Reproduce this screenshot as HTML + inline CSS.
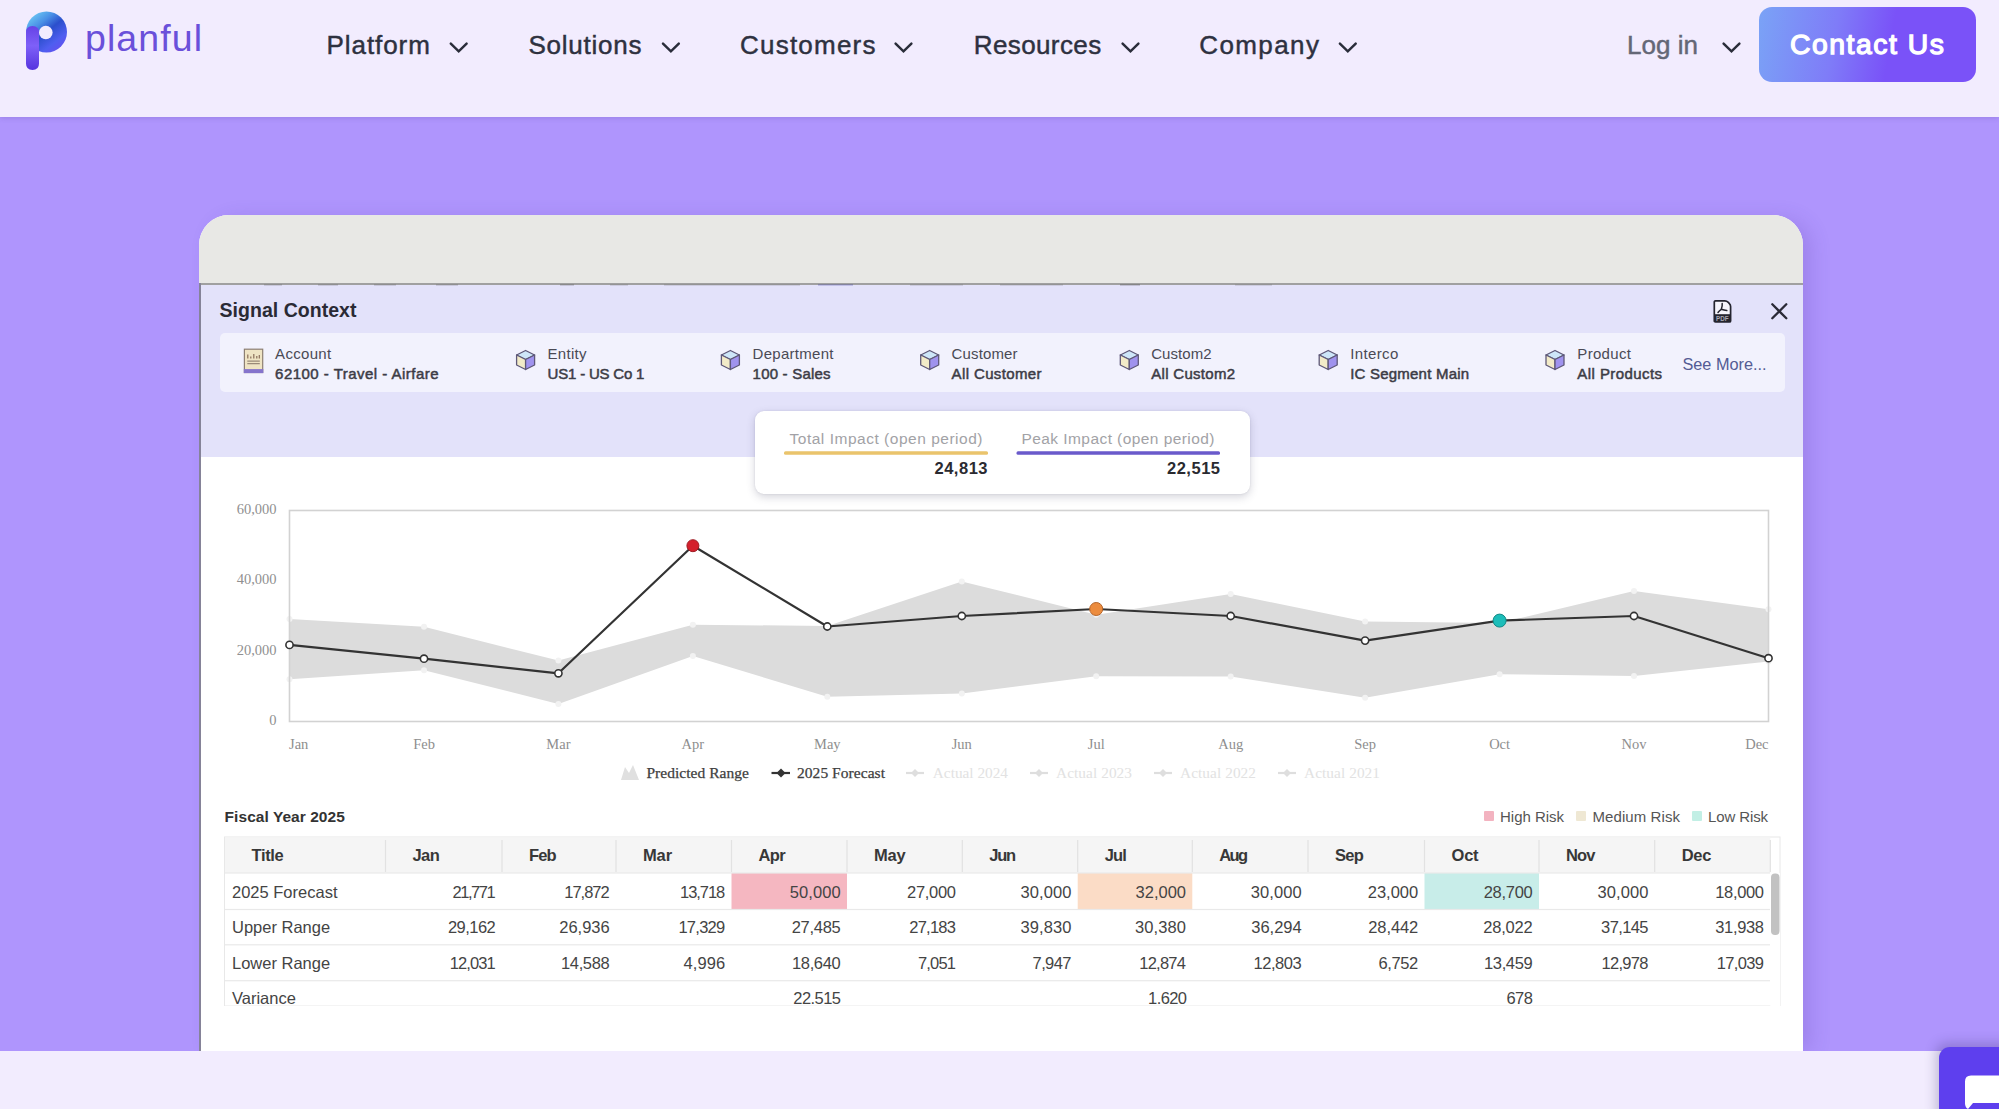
<!DOCTYPE html>
<html><head><meta charset="utf-8">
<style>
*{box-sizing:border-box;margin:0;padding:0}
html,body{width:1999px;height:1109px;overflow:hidden;background:#f2ecfe;font-family:"Liberation Sans",sans-serif}
.abs{position:absolute}
#nav{position:absolute;left:0;top:0;width:1999px;height:117px;background:#f2ecfe;z-index:2;box-shadow:0 1px 5px rgba(80,60,150,0.22)}
#hero{position:absolute;left:0;top:117px;width:1999px;height:934px;background:#af95fd}
#card{position:absolute;left:199px;top:215px;width:1604px;height:836px;background:#fff;border-radius:30px 30px 0 0;overflow:hidden;box-shadow:10px 2px 20px -2px rgba(70,40,150,0.17)}
#graybar{position:absolute;left:0;top:0;width:1604px;height:69px;background:#e8e8e5}
#sep{position:absolute;left:0;top:68px;width:1604px;height:2px;background:#a0a0a0}
#lav{position:absolute;left:0;top:70px;width:1604px;height:172px;background:#e3e2fa}
#leftline{position:absolute;left:0.3px;top:68px;width:1.3px;height:768px;background:#858398}
#ctxrow{position:absolute;left:21px;top:118px;width:1565px;height:59px;background:#f2f2fd;border-radius:5px}
#popup{position:absolute;left:755px;top:411px;width:495px;height:83px;background:#fff;border-radius:9px;box-shadow:0 3px 8px rgba(60,60,90,0.22),0 0 2px rgba(60,60,90,0.12)}
svg.ov{position:absolute;left:0;top:0;z-index:3}
#chat{z-index:2;position:absolute;left:1938.5px;top:1047px;width:80px;height:80px;background:#5e3fee;border-radius:11px;box-shadow:-3px -4px 12px rgba(40,30,90,0.25)}
</style></head>
<body>
<div id="nav">
  <svg class="abs" style="left:20px;top:8px" width="54" height="68" viewBox="0 0 54 68">
    <defs>
      <linearGradient id="lg1" x1="0.1" y1="0" x2="0.9" y2="1">
        <stop offset="0" stop-color="#74d6f7"/><stop offset="0.3" stop-color="#4a90e6"/><stop offset="0.5" stop-color="#2b4fcc"/><stop offset="0.75" stop-color="#4f5ef0"/><stop offset="1" stop-color="#6c4cf0"/>
      </linearGradient>
      <linearGradient id="lg2" x1="0" y1="0" x2="0" y2="1">
        <stop offset="0" stop-color="#6642e6"/><stop offset="0.45" stop-color="#7e60f8"/><stop offset="1" stop-color="#5634de"/>
      </linearGradient>
    </defs>
    <circle cx="26.5" cy="24" r="20.5" fill="url(#lg1)"/>
    <path d="M6 24.5 Q6 18 12.5 18 Q19 18 19 24.5 L19 55.5 Q19 62 12.5 62 Q6 62 6 55.5 Z" fill="url(#lg2)"/>
    <circle cx="25.8" cy="24.5" r="6.8" fill="#f2ecfe"/>
  </svg>
  <div class="abs" style="left:1759px;top:7px;width:217px;height:75px;border-radius:13px;background:linear-gradient(100deg,#7aa3f6 0%,#7f7cf8 35%,#7a52f8 60%,#7a52f8 100%)"></div>
</div>

<div id="hero"></div>
<div style="position:absolute;left:0;top:1051px;width:1999px;height:58px;background:#f2ecfe;z-index:1"></div>

<div id="card">
  <div id="graybar"></div>
  <div id="sep"></div>
  <div id="lav"></div>
  <div id="leftline"></div>
  <div id="ctxrow"></div>
</div>
<div id="popup"></div>
<div id="chat"></div>

<svg class="ov" width="1999" height="1109" viewBox="0 0 1999 1109">
  <defs><clipPath id="tclip"><rect x="0" y="0" width="1999" height="1006"/></clipPath></defs>
  <text x="326.6" y="53.8" font-size="26" fill="#2e3140" font-weight="normal" text-anchor="start" font-family='"Liberation Sans",sans-serif' textLength="103.2" lengthAdjust="spacing" stroke="#2e3140" stroke-width="0.45">Platform</text><text x="528.4" y="53.8" font-size="26" fill="#2e3140" font-weight="normal" text-anchor="start" font-family='"Liberation Sans",sans-serif' textLength="113.2" lengthAdjust="spacing" stroke="#2e3140" stroke-width="0.45">Solutions</text><text x="740.1" y="53.8" font-size="26" fill="#2e3140" font-weight="normal" text-anchor="start" font-family='"Liberation Sans",sans-serif' textLength="135.3" lengthAdjust="spacing" stroke="#2e3140" stroke-width="0.45">Customers</text><text x="973.7" y="53.8" font-size="26" fill="#2e3140" font-weight="normal" text-anchor="start" font-family='"Liberation Sans",sans-serif' textLength="127.5" lengthAdjust="spacing" stroke="#2e3140" stroke-width="0.45">Resources</text><text x="1199.2" y="53.8" font-size="26" fill="#2e3140" font-weight="normal" text-anchor="start" font-family='"Liberation Sans",sans-serif' textLength="119.7" lengthAdjust="spacing" stroke="#2e3140" stroke-width="0.45">Company</text><text x="1627" y="53.9" font-size="26" fill="#646776" font-weight="normal" text-anchor="start" font-family='"Liberation Sans",sans-serif' textLength="71" lengthAdjust="spacing" stroke="#646776" stroke-width="0.45">Log in</text><path d="M450.8 43.6 L458.7 51.3 L466.59999999999997 43.6" fill="none" stroke="#2a2d3a" stroke-width="2.5" stroke-linecap="round" stroke-linejoin="miter"/><path d="M663.0 43.6 L670.9 51.3 L678.8 43.6" fill="none" stroke="#2a2d3a" stroke-width="2.5" stroke-linecap="round" stroke-linejoin="miter"/><path d="M895.6 43.6 L903.5 51.3 L911.4 43.6" fill="none" stroke="#2a2d3a" stroke-width="2.5" stroke-linecap="round" stroke-linejoin="miter"/><path d="M1122.6 43.6 L1130.5 51.3 L1138.4 43.6" fill="none" stroke="#2a2d3a" stroke-width="2.5" stroke-linecap="round" stroke-linejoin="miter"/><path d="M1339.8999999999999 43.6 L1347.8 51.3 L1355.7 43.6" fill="none" stroke="#2a2d3a" stroke-width="2.5" stroke-linecap="round" stroke-linejoin="miter"/><path d="M1723.6 43.6 L1731.5 51.3 L1739.4 43.6" fill="none" stroke="#2a2d3a" stroke-width="2.5" stroke-linecap="round" stroke-linejoin="miter"/><text x="1790" y="54" font-size="28.3" fill="#ffffff" font-weight="normal" text-anchor="start" font-family='"Liberation Sans",sans-serif' textLength="154" lengthAdjust="spacing" stroke="#ffffff" stroke-width="1.3">Contact Us</text><text x="85" y="51" font-size="37.5" fill="#6a50da" font-weight="normal" text-anchor="start" font-family='"Liberation Sans",sans-serif' textLength="117" lengthAdjust="spacing" >planful</text>
  <rect x="264" y="284.3" width="18" height="1.2" fill="#666" opacity="0.4"/><rect x="318" y="284.3" width="20" height="1.2" fill="#666" opacity="0.4"/><rect x="374" y="284.3" width="22" height="1.2" fill="#666" opacity="0.4"/><rect x="436" y="284.3" width="22" height="1.2" fill="#666" opacity="0.4"/><rect x="560" y="284.3" width="14" height="1.2" fill="#555" opacity="0.4"/><rect x="610" y="284.3" width="18" height="1.2" fill="#777" opacity="0.4"/><rect x="664" y="284.3" width="136" height="1.2" fill="#777" opacity="0.4"/><rect x="818" y="284.3" width="35" height="1.2" fill="#3a3a9a" opacity="0.4"/><rect x="910" y="284.3" width="53" height="1.2" fill="#777" opacity="0.4"/><rect x="1000" y="284.3" width="63" height="1.2" fill="#777" opacity="0.4"/><rect x="1120" y="284.3" width="20" height="1.2" fill="#444" opacity="0.4"/><rect x="1235" y="284.3" width="37" height="1.2" fill="#777" opacity="0.4"/><text x="219.5" y="317.2" font-size="19.5" fill="#2a2a35" font-weight="bold" text-anchor="start" font-family='"Liberation Sans",sans-serif' textLength="137" lengthAdjust="spacing" >Signal Context</text><path d="M1772.3 304.3 L1786.3 318.3 M1786.3 304.3 L1772.3 318.3" stroke="#2a2a36" stroke-width="2.3" stroke-linecap="round" fill="none"/><g transform="translate(1713,300)"><path d="M1.3 2 Q1.3 0.9 2.5 0.9 L11.8 0.9 Q13.8 0.9 15.3 2.4 L16.2 3.3 Q17.6 4.7 17.6 6.5 L17.6 20.9 Q17.6 22 16.4 22 L2.5 22 Q1.3 22 1.3 20.9 Z" fill="#f6f5fc" stroke="#25252f" stroke-width="1.7"/><rect x="1.3" y="14.2" width="16.3" height="7.8" fill="#25252f"/><text x="9.4" y="20.6" font-size="6.3" font-weight="bold" fill="#a8a8b4" text-anchor="middle" font-family='"Liberation Sans",sans-serif'>PDF</text><path d="M5 12.5 Q6.5 10.5 8.3 9.3 Q9.5 6 9.2 3.6 M8.3 9.3 Q11 10.2 13.8 10.6" fill="none" stroke="#25252f" stroke-width="1.5" stroke-linecap="round"/></g><text x="275.1" y="359.2" font-size="15" fill="#4a4a55" font-weight="normal" text-anchor="start" font-family='"Liberation Sans",sans-serif' textLength="56.1" lengthAdjust="spacing" >Account</text><text x="275.1" y="379.2" font-size="15" fill="#3c3c46" font-weight="normal" text-anchor="start" font-family='"Liberation Sans",sans-serif' textLength="163.5" lengthAdjust="spacing" stroke="#3c3c46" stroke-width="0.5">62100 - Travel - Airfare</text><g transform="translate(243.8,348.6)"><rect x="0.6" y="0.6" width="18.3" height="23.3" fill="#efe4c4" stroke="#8c7f72" stroke-width="1.2"/><rect x="0" y="20.5" width="19.5" height="4" fill="#8574cc"/><path d="M4 10 L4 6 M7 10 L7 8 M10 10 L10 5.5 M13 10 L13 7.5 M15.5 10 L15.5 6.5" stroke="#8a6e5a" stroke-width="1.2"/><path d="M3.5 12.5 L16 12.5 M3.5 15 L16 15" stroke="#9a8a78" stroke-width="1.1"/></g><text x="547.6" y="359.2" font-size="15" fill="#4a4a55" font-weight="normal" text-anchor="start" font-family='"Liberation Sans",sans-serif' textLength="38.8" lengthAdjust="spacing" >Entity</text><text x="547.6" y="379.2" font-size="15" fill="#3c3c46" font-weight="normal" text-anchor="start" font-family='"Liberation Sans",sans-serif' textLength="96.8" lengthAdjust="spacing" stroke="#3c3c46" stroke-width="0.5">US1 - US Co 1</text><g transform="translate(515.6,349.5)"><path d="M10 1 L19 5.5 L10 10 L1 5.5 Z" fill="#cde6f8" stroke="#5e5878" stroke-width="1.3" stroke-linejoin="round"/><path d="M1 5.5 L10 10 L10 20 L1 15.5 Z" fill="#f2ebc8" stroke="#5e5878" stroke-width="1.3" stroke-linejoin="round"/><path d="M19 5.5 L10 10 L10 20 L19 15.5 Z" fill="#a093ee" stroke="#5e5878" stroke-width="1.3" stroke-linejoin="round"/></g><text x="752.6" y="359.2" font-size="15" fill="#4a4a55" font-weight="normal" text-anchor="start" font-family='"Liberation Sans",sans-serif' textLength="80.9" lengthAdjust="spacing" >Department</text><text x="752.6" y="379.2" font-size="15" fill="#3c3c46" font-weight="normal" text-anchor="start" font-family='"Liberation Sans",sans-serif' textLength="77.9" lengthAdjust="spacing" stroke="#3c3c46" stroke-width="0.5">100 - Sales</text><g transform="translate(720.4,349.5)"><path d="M10 1 L19 5.5 L10 10 L1 5.5 Z" fill="#cde6f8" stroke="#5e5878" stroke-width="1.3" stroke-linejoin="round"/><path d="M1 5.5 L10 10 L10 20 L1 15.5 Z" fill="#f2ebc8" stroke="#5e5878" stroke-width="1.3" stroke-linejoin="round"/><path d="M19 5.5 L10 10 L10 20 L19 15.5 Z" fill="#a093ee" stroke="#5e5878" stroke-width="1.3" stroke-linejoin="round"/></g><text x="951.6" y="359.2" font-size="15" fill="#4a4a55" font-weight="normal" text-anchor="start" font-family='"Liberation Sans",sans-serif' textLength="65.9" lengthAdjust="spacing" >Customer</text><text x="951.6" y="379.2" font-size="15" fill="#3c3c46" font-weight="normal" text-anchor="start" font-family='"Liberation Sans",sans-serif' textLength="89.9" lengthAdjust="spacing" stroke="#3c3c46" stroke-width="0.5">All Customer</text><g transform="translate(919.7,349.5)"><path d="M10 1 L19 5.5 L10 10 L1 5.5 Z" fill="#cde6f8" stroke="#5e5878" stroke-width="1.3" stroke-linejoin="round"/><path d="M1 5.5 L10 10 L10 20 L1 15.5 Z" fill="#f2ebc8" stroke="#5e5878" stroke-width="1.3" stroke-linejoin="round"/><path d="M19 5.5 L10 10 L10 20 L19 15.5 Z" fill="#a093ee" stroke="#5e5878" stroke-width="1.3" stroke-linejoin="round"/></g><text x="1151.2" y="359.2" font-size="15" fill="#4a4a55" font-weight="normal" text-anchor="start" font-family='"Liberation Sans",sans-serif' textLength="60.5" lengthAdjust="spacing" >Custom2</text><text x="1151.2" y="379.2" font-size="15" fill="#3c3c46" font-weight="normal" text-anchor="start" font-family='"Liberation Sans",sans-serif' textLength="83.9" lengthAdjust="spacing" stroke="#3c3c46" stroke-width="0.5">All Custom2</text><g transform="translate(1119.3,349.5)"><path d="M10 1 L19 5.5 L10 10 L1 5.5 Z" fill="#cde6f8" stroke="#5e5878" stroke-width="1.3" stroke-linejoin="round"/><path d="M1 5.5 L10 10 L10 20 L1 15.5 Z" fill="#f2ebc8" stroke="#5e5878" stroke-width="1.3" stroke-linejoin="round"/><path d="M19 5.5 L10 10 L10 20 L19 15.5 Z" fill="#a093ee" stroke="#5e5878" stroke-width="1.3" stroke-linejoin="round"/></g><text x="1350.2" y="359.2" font-size="15" fill="#4a4a55" font-weight="normal" text-anchor="start" font-family='"Liberation Sans",sans-serif' textLength="48.1" lengthAdjust="spacing" >Interco</text><text x="1350.2" y="379.2" font-size="15" fill="#3c3c46" font-weight="normal" text-anchor="start" font-family='"Liberation Sans",sans-serif' textLength="118.9" lengthAdjust="spacing" stroke="#3c3c46" stroke-width="0.5">IC Segment Main</text><g transform="translate(1318.2,349.5)"><path d="M10 1 L19 5.5 L10 10 L1 5.5 Z" fill="#cde6f8" stroke="#5e5878" stroke-width="1.3" stroke-linejoin="round"/><path d="M1 5.5 L10 10 L10 20 L1 15.5 Z" fill="#f2ebc8" stroke="#5e5878" stroke-width="1.3" stroke-linejoin="round"/><path d="M19 5.5 L10 10 L10 20 L19 15.5 Z" fill="#a093ee" stroke="#5e5878" stroke-width="1.3" stroke-linejoin="round"/></g><text x="1577.3" y="359.2" font-size="15" fill="#4a4a55" font-weight="normal" text-anchor="start" font-family='"Liberation Sans",sans-serif' textLength="53.6" lengthAdjust="spacing" >Product</text><text x="1577.3" y="379.2" font-size="15" fill="#3c3c46" font-weight="normal" text-anchor="start" font-family='"Liberation Sans",sans-serif' textLength="84.8" lengthAdjust="spacing" stroke="#3c3c46" stroke-width="0.5">All Products</text><g transform="translate(1545,349.5)"><path d="M10 1 L19 5.5 L10 10 L1 5.5 Z" fill="#cde6f8" stroke="#5e5878" stroke-width="1.3" stroke-linejoin="round"/><path d="M1 5.5 L10 10 L10 20 L1 15.5 Z" fill="#f2ebc8" stroke="#5e5878" stroke-width="1.3" stroke-linejoin="round"/><path d="M19 5.5 L10 10 L10 20 L19 15.5 Z" fill="#a093ee" stroke="#5e5878" stroke-width="1.3" stroke-linejoin="round"/></g><text x="1682.4" y="369.7" font-size="16.3" fill="#545c94" font-weight="normal" text-anchor="start" font-family='"Liberation Sans",sans-serif' >See More...</text><text x="789.5" y="443.5" font-size="15.5" fill="#a2a2a6" font-weight="normal" text-anchor="start" font-family='"Liberation Sans",sans-serif' textLength="193" lengthAdjust="spacing" >Total Impact (open period)</text><text x="1021.5" y="443.5" font-size="15.5" fill="#a2a2a6" font-weight="normal" text-anchor="start" font-family='"Liberation Sans",sans-serif' textLength="193" lengthAdjust="spacing" >Peak Impact (open period)</text><rect x="784" y="451.3" width="204" height="3.4" rx="1.5" fill="#eac46c"/><rect x="1016.5" y="451.3" width="203.5" height="3.4" rx="1.5" fill="#6a5acb"/><text x="987.5" y="473.7" font-size="16.5" fill="#2a2a30" font-weight="bold" text-anchor="end" font-family='"Liberation Sans",sans-serif' textLength="53" lengthAdjust="spacing" >24,813</text><text x="1220" y="473.7" font-size="16.5" fill="#2a2a30" font-weight="bold" text-anchor="end" font-family='"Liberation Sans",sans-serif' textLength="53" lengthAdjust="spacing" >22,515</text>
  <polygon points="289.5,618.9 424.0,626.8 558.4,660.6 692.9,624.8 827.3,625.9 961.8,581.4 1096.2,614.7 1230.7,593.9 1365.1,621.5 1499.6,623.0 1634.0,590.9 1768.5,609.2 1768.5,661.6 1634.0,675.9 1499.6,674.2 1365.1,697.8 1230.7,676.5 1096.2,676.2 961.8,693.6 827.3,696.7 692.9,655.9 558.4,703.9 424.0,670.2 289.5,679.2" fill="#dcdcdc"/><circle cx="289.5" cy="618.9" r="3" fill="#f2f2f2"/><circle cx="424.0" cy="626.8" r="3" fill="#f2f2f2"/><circle cx="558.4" cy="660.6" r="3" fill="#f2f2f2"/><circle cx="692.9" cy="624.8" r="3" fill="#f2f2f2"/><circle cx="827.3" cy="625.9" r="3" fill="#f2f2f2"/><circle cx="961.8" cy="581.4" r="3" fill="#f2f2f2"/><circle cx="1096.2" cy="614.7" r="3" fill="#f2f2f2"/><circle cx="1230.7" cy="593.9" r="3" fill="#f2f2f2"/><circle cx="1365.1" cy="621.5" r="3" fill="#f2f2f2"/><circle cx="1499.6" cy="623.0" r="3" fill="#f2f2f2"/><circle cx="1634.0" cy="590.9" r="3" fill="#f2f2f2"/><circle cx="1768.5" cy="609.2" r="3" fill="#f2f2f2"/><circle cx="289.5" cy="679.2" r="3" fill="#f2f2f2"/><circle cx="424.0" cy="670.2" r="3" fill="#f2f2f2"/><circle cx="558.4" cy="703.9" r="3" fill="#f2f2f2"/><circle cx="692.9" cy="655.9" r="3" fill="#f2f2f2"/><circle cx="827.3" cy="696.7" r="3" fill="#f2f2f2"/><circle cx="961.8" cy="693.6" r="3" fill="#f2f2f2"/><circle cx="1096.2" cy="676.2" r="3" fill="#f2f2f2"/><circle cx="1230.7" cy="676.5" r="3" fill="#f2f2f2"/><circle cx="1365.1" cy="697.8" r="3" fill="#f2f2f2"/><circle cx="1499.6" cy="674.2" r="3" fill="#f2f2f2"/><circle cx="1634.0" cy="675.9" r="3" fill="#f2f2f2"/><circle cx="1768.5" cy="661.6" r="3" fill="#f2f2f2"/><rect x="289.5" y="510.5" width="1479.0" height="211.0" fill="none" stroke="#d2d2d2" stroke-width="1.6"/><polyline points="289.5,644.9 424.0,658.7 558.4,673.3 692.9,545.7 827.3,626.5 961.8,616.0 1096.2,609.0 1230.7,616.0 1365.1,640.6 1499.6,620.6 1634.0,616.0 1768.5,658.2" fill="none" stroke="#333333" stroke-width="2.2" stroke-linejoin="round"/><circle cx="289.5" cy="644.9" r="3.6" fill="#fff" stroke="#333" stroke-width="1.6"/><circle cx="424.0" cy="658.7" r="3.6" fill="#fff" stroke="#333" stroke-width="1.6"/><circle cx="558.4" cy="673.3" r="3.6" fill="#fff" stroke="#333" stroke-width="1.6"/><circle cx="692.9" cy="545.7" r="6" fill="#d4202c" stroke="#9e1a22" stroke-width="1"/><circle cx="827.3" cy="626.5" r="3.6" fill="#fff" stroke="#333" stroke-width="1.6"/><circle cx="961.8" cy="616.0" r="3.6" fill="#fff" stroke="#333" stroke-width="1.6"/><circle cx="1096.2" cy="609.0" r="6.5" fill="#ec8c3e" stroke="#b5652a" stroke-width="1"/><circle cx="1230.7" cy="616.0" r="3.6" fill="#fff" stroke="#333" stroke-width="1.6"/><circle cx="1365.1" cy="640.6" r="3.6" fill="#fff" stroke="#333" stroke-width="1.6"/><circle cx="1499.6" cy="620.6" r="6.5" fill="#1cbdb9" stroke="#138a86" stroke-width="1"/><circle cx="1634.0" cy="616.0" r="3.6" fill="#fff" stroke="#333" stroke-width="1.6"/><circle cx="1768.5" cy="658.2" r="3.6" fill="#fff" stroke="#333" stroke-width="1.6"/><text x="276.5" y="724.8" font-size="14.5" fill="#909090" font-weight="normal" text-anchor="end" font-family='"Liberation Serif",serif' >0</text><text x="276.5" y="654.5" font-size="14.5" fill="#909090" font-weight="normal" text-anchor="end" font-family='"Liberation Serif",serif' >20,000</text><text x="276.5" y="584.1" font-size="14.5" fill="#909090" font-weight="normal" text-anchor="end" font-family='"Liberation Serif",serif' >40,000</text><text x="276.5" y="513.8" font-size="14.5" fill="#909090" font-weight="normal" text-anchor="end" font-family='"Liberation Serif",serif' >60,000</text><text x="289" y="748.6" font-size="14.5" fill="#8e8e8e" font-weight="normal" text-anchor="start" font-family='"Liberation Serif",serif' >Jan</text><text x="424.0" y="748.6" font-size="14.5" fill="#8e8e8e" font-weight="normal" text-anchor="middle" font-family='"Liberation Serif",serif' >Feb</text><text x="558.4" y="748.6" font-size="14.5" fill="#8e8e8e" font-weight="normal" text-anchor="middle" font-family='"Liberation Serif",serif' >Mar</text><text x="692.9" y="748.6" font-size="14.5" fill="#8e8e8e" font-weight="normal" text-anchor="middle" font-family='"Liberation Serif",serif' >Apr</text><text x="827.3" y="748.6" font-size="14.5" fill="#8e8e8e" font-weight="normal" text-anchor="middle" font-family='"Liberation Serif",serif' >May</text><text x="961.8" y="748.6" font-size="14.5" fill="#8e8e8e" font-weight="normal" text-anchor="middle" font-family='"Liberation Serif",serif' >Jun</text><text x="1096.2" y="748.6" font-size="14.5" fill="#8e8e8e" font-weight="normal" text-anchor="middle" font-family='"Liberation Serif",serif' >Jul</text><text x="1230.7" y="748.6" font-size="14.5" fill="#8e8e8e" font-weight="normal" text-anchor="middle" font-family='"Liberation Serif",serif' >Aug</text><text x="1365.1" y="748.6" font-size="14.5" fill="#8e8e8e" font-weight="normal" text-anchor="middle" font-family='"Liberation Serif",serif' >Sep</text><text x="1499.6" y="748.6" font-size="14.5" fill="#8e8e8e" font-weight="normal" text-anchor="middle" font-family='"Liberation Serif",serif' >Oct</text><text x="1634.0" y="748.6" font-size="14.5" fill="#8e8e8e" font-weight="normal" text-anchor="middle" font-family='"Liberation Serif",serif' >Nov</text><text x="1768.5" y="748.6" font-size="14.5" fill="#8e8e8e" font-weight="normal" text-anchor="end" font-family='"Liberation Serif",serif' >Dec</text><path d="M621 780 L625 767 L629 773 L633 765 L639 780 Z" fill="#e0e0e0"/><text x="646.4" y="778.2" font-size="15.5" fill="#404040" font-weight="normal" text-anchor="start" font-family='"Liberation Serif",serif' textLength="102.6" lengthAdjust="spacing" stroke="#404040" stroke-width="0.25">Predicted Range</text><path d="M771.5 773 L790 773" stroke="#333" stroke-width="2.2"/><path d="M781 768.5 L785.5 773 L781 777.5 L776.5 773 Z" fill="#333"/><text x="797" y="778.2" font-size="15.5" fill="#404040" font-weight="normal" text-anchor="start" font-family='"Liberation Serif",serif' textLength="88" lengthAdjust="spacing" stroke="#404040" stroke-width="0.25">2025 Forecast</text><path d="M906 773 L924 773" stroke="#dedede" stroke-width="2.2"/><path d="M915 769 L919 773 L915 777 L911 773 Z" fill="#dedede"/><text x="932.8" y="778.2" font-size="15.3" fill="#e2e2e2" font-weight="normal" text-anchor="start" font-family='"Liberation Serif",serif' textLength="75.2" lengthAdjust="spacing" >Actual 2024</text><path d="M1030 773 L1048 773" stroke="#dedede" stroke-width="2.2"/><path d="M1039 769 L1043 773 L1039 777 L1035 773 Z" fill="#dedede"/><text x="1056" y="778.2" font-size="15.3" fill="#e2e2e2" font-weight="normal" text-anchor="start" font-family='"Liberation Serif",serif' textLength="76" lengthAdjust="spacing" >Actual 2023</text><path d="M1154 773 L1172 773" stroke="#dedede" stroke-width="2.2"/><path d="M1163 769 L1167 773 L1163 777 L1159 773 Z" fill="#dedede"/><text x="1180" y="778.2" font-size="15.3" fill="#e2e2e2" font-weight="normal" text-anchor="start" font-family='"Liberation Serif",serif' textLength="76" lengthAdjust="spacing" >Actual 2022</text><path d="M1278 773 L1296 773" stroke="#dedede" stroke-width="2.2"/><path d="M1287 769 L1291 773 L1287 777 L1283 773 Z" fill="#dedede"/><text x="1304" y="778.2" font-size="15.3" fill="#e2e2e2" font-weight="normal" text-anchor="start" font-family='"Liberation Serif",serif' textLength="76" lengthAdjust="spacing" >Actual 2021</text>
  <g clip-path="url(#tclip)"><text x="224.6" y="822.4" font-size="15.5" fill="#333" font-weight="bold" text-anchor="start" font-family='"Liberation Sans",sans-serif' textLength="120.2" lengthAdjust="spacing" >Fiscal Year 2025</text><rect x="1484" y="811" width="10" height="10" rx="1" fill="#f3b3c0"/><text x="1500" y="822.2" font-size="15" fill="#555" font-weight="normal" text-anchor="start" font-family='"Liberation Sans",sans-serif' textLength="64" lengthAdjust="spacing" >High Risk</text><rect x="1576" y="811" width="10" height="10" rx="1" fill="#efe8d4"/><text x="1592.5" y="822.2" font-size="15" fill="#555" font-weight="normal" text-anchor="start" font-family='"Liberation Sans",sans-serif' textLength="87.5" lengthAdjust="spacing" >Medium Risk</text><rect x="1692" y="811" width="10" height="10" rx="1" fill="#c2efe5"/><text x="1708" y="822.2" font-size="15" fill="#555" font-weight="normal" text-anchor="start" font-family='"Liberation Sans",sans-serif' textLength="60" lengthAdjust="spacing" >Low Risk</text><rect x="224.5" y="837" width="1555.5" height="169" fill="#fff" stroke="#e8e8e8" stroke-width="1"/><rect x="225" y="837.5" width="1545.3" height="35.5" fill="#f5f5f5"/><rect x="731.5" y="873" width="115.5" height="36.5" fill="#f5b7c1"/><rect x="1077.7" y="873" width="114.59999999999991" height="36.5" fill="#fbdcc6"/><rect x="1424.5" y="873" width="114.5" height="36.5" fill="#c8ede9"/><rect x="384.9" y="840" width="1.2" height="32" fill="#e2e2e2"/><rect x="501.4" y="840" width="1.2" height="32" fill="#e2e2e2"/><rect x="615.4" y="840" width="1.2" height="32" fill="#e2e2e2"/><rect x="730.9" y="840" width="1.2" height="32" fill="#e2e2e2"/><rect x="846.4" y="840" width="1.2" height="32" fill="#e2e2e2"/><rect x="961.6999999999999" y="840" width="1.2" height="32" fill="#e2e2e2"/><rect x="1077.1000000000001" y="840" width="1.2" height="32" fill="#e2e2e2"/><rect x="1191.7" y="840" width="1.2" height="32" fill="#e2e2e2"/><rect x="1307.4" y="840" width="1.2" height="32" fill="#e2e2e2"/><rect x="1423.9" y="840" width="1.2" height="32" fill="#e2e2e2"/><rect x="1538.4" y="840" width="1.2" height="32" fill="#e2e2e2"/><rect x="1654.1000000000001" y="840" width="1.2" height="32" fill="#e2e2e2"/><rect x="1769.7" y="840" width="1.2" height="32" fill="#e2e2e2"/><rect x="225" y="872.4" width="1545" height="1.2" fill="#e9e9e9"/><rect x="225" y="908.9" width="1545" height="1.2" fill="#e9e9e9"/><rect x="225" y="944.1999999999999" width="1545" height="1.2" fill="#e9e9e9"/><rect x="225" y="980.1" width="1545" height="1.2" fill="#e9e9e9"/><text x="251.5" y="860.7" font-size="16.5" fill="#383838" font-weight="bold" text-anchor="start" font-family='"Liberation Sans",sans-serif' textLength="32.2" lengthAdjust="spacing" >Title</text><text x="412.5" y="860.7" font-size="16.5" fill="#383838" font-weight="bold" text-anchor="start" font-family='"Liberation Sans",sans-serif' textLength="27.3" lengthAdjust="spacing" >Jan</text><text x="529" y="860.7" font-size="16.5" fill="#383838" font-weight="bold" text-anchor="start" font-family='"Liberation Sans",sans-serif' textLength="27.7" lengthAdjust="spacing" >Feb</text><text x="643" y="860.7" font-size="16.5" fill="#383838" font-weight="bold" text-anchor="start" font-family='"Liberation Sans",sans-serif' textLength="29.1" lengthAdjust="spacing" >Mar</text><text x="758.5" y="860.7" font-size="16.5" fill="#383838" font-weight="bold" text-anchor="start" font-family='"Liberation Sans",sans-serif' textLength="27.1" lengthAdjust="spacing" >Apr</text><text x="874" y="860.7" font-size="16.5" fill="#383838" font-weight="bold" text-anchor="start" font-family='"Liberation Sans",sans-serif' textLength="31.6" lengthAdjust="spacing" >May</text><text x="989.3" y="860.7" font-size="16.5" fill="#383838" font-weight="bold" text-anchor="start" font-family='"Liberation Sans",sans-serif' textLength="26.8" lengthAdjust="spacing" >Jun</text><text x="1104.7" y="860.7" font-size="16.5" fill="#383838" font-weight="bold" text-anchor="start" font-family='"Liberation Sans",sans-serif' textLength="22.1" lengthAdjust="spacing" >Jul</text><text x="1219.3" y="860.7" font-size="16.5" fill="#383838" font-weight="bold" text-anchor="start" font-family='"Liberation Sans",sans-serif' textLength="28.8" lengthAdjust="spacing" >Aug</text><text x="1335" y="860.7" font-size="16.5" fill="#383838" font-weight="bold" text-anchor="start" font-family='"Liberation Sans",sans-serif' textLength="28.8" lengthAdjust="spacing" >Sep</text><text x="1451.5" y="860.7" font-size="16.5" fill="#383838" font-weight="bold" text-anchor="start" font-family='"Liberation Sans",sans-serif' textLength="27.1" lengthAdjust="spacing" >Oct</text><text x="1566" y="860.7" font-size="16.5" fill="#383838" font-weight="bold" text-anchor="start" font-family='"Liberation Sans",sans-serif' textLength="29.400000000000002" lengthAdjust="spacing" >Nov</text><text x="1681.7" y="860.7" font-size="16.5" fill="#383838" font-weight="bold" text-anchor="start" font-family='"Liberation Sans",sans-serif' textLength="29.7" lengthAdjust="spacing" >Dec</text><text x="232" y="897.7" font-size="16.5" fill="#444" font-weight="normal" text-anchor="start" font-family='"Liberation Sans",sans-serif' >2025 Forecast</text><text x="495.7" y="897.7" font-size="16.5" fill="#444" font-weight="normal" text-anchor="end" font-family='"Liberation Sans",sans-serif' textLength="43.2" lengthAdjust="spacing" >21,771</text><text x="609.7" y="897.7" font-size="16.5" fill="#444" font-weight="normal" text-anchor="end" font-family='"Liberation Sans",sans-serif' textLength="45.4" lengthAdjust="spacing" >17,872</text><text x="725.2" y="897.7" font-size="16.5" fill="#444" font-weight="normal" text-anchor="end" font-family='"Liberation Sans",sans-serif' textLength="45.1" lengthAdjust="spacing" >13,718</text><text x="840.7" y="897.7" font-size="16.5" fill="#444" font-weight="normal" text-anchor="end" font-family='"Liberation Sans",sans-serif' textLength="50.9" lengthAdjust="spacing" >50,000</text><text x="956.0" y="897.7" font-size="16.5" fill="#444" font-weight="normal" text-anchor="end" font-family='"Liberation Sans",sans-serif' textLength="49.0" lengthAdjust="spacing" >27,000</text><text x="1071.4" y="897.7" font-size="16.5" fill="#444" font-weight="normal" text-anchor="end" font-family='"Liberation Sans",sans-serif' textLength="50.9" lengthAdjust="spacing" >30,000</text><text x="1186.0" y="897.7" font-size="16.5" fill="#444" font-weight="normal" text-anchor="end" font-family='"Liberation Sans",sans-serif' textLength="50.4" lengthAdjust="spacing" >32,000</text><text x="1301.7" y="897.7" font-size="16.5" fill="#444" font-weight="normal" text-anchor="end" font-family='"Liberation Sans",sans-serif' textLength="50.9" lengthAdjust="spacing" >30,000</text><text x="1418.2" y="897.7" font-size="16.5" fill="#444" font-weight="normal" text-anchor="end" font-family='"Liberation Sans",sans-serif' textLength="50.4" lengthAdjust="spacing" >23,000</text><text x="1532.7" y="897.7" font-size="16.5" fill="#444" font-weight="normal" text-anchor="end" font-family='"Liberation Sans",sans-serif' textLength="49.0" lengthAdjust="spacing" >28,700</text><text x="1648.4" y="897.7" font-size="16.5" fill="#444" font-weight="normal" text-anchor="end" font-family='"Liberation Sans",sans-serif' textLength="50.9" lengthAdjust="spacing" >30,000</text><text x="1764.0" y="897.7" font-size="16.5" fill="#444" font-weight="normal" text-anchor="end" font-family='"Liberation Sans",sans-serif' textLength="48.7" lengthAdjust="spacing" >18,000</text><text x="232" y="933.1" font-size="16.5" fill="#444" font-weight="normal" text-anchor="start" font-family='"Liberation Sans",sans-serif' >Upper Range</text><text x="495.7" y="933.1" font-size="16.5" fill="#444" font-weight="normal" text-anchor="end" font-family='"Liberation Sans",sans-serif' textLength="47.7" lengthAdjust="spacing" >29,162</text><text x="609.7" y="933.1" font-size="16.5" fill="#444" font-weight="normal" text-anchor="end" font-family='"Liberation Sans",sans-serif' textLength="50.4" lengthAdjust="spacing" >26,936</text><text x="725.2" y="933.1" font-size="16.5" fill="#444" font-weight="normal" text-anchor="end" font-family='"Liberation Sans",sans-serif' textLength="46.8" lengthAdjust="spacing" >17,329</text><text x="840.7" y="933.1" font-size="16.5" fill="#444" font-weight="normal" text-anchor="end" font-family='"Liberation Sans",sans-serif' textLength="49.0" lengthAdjust="spacing" >27,485</text><text x="956.0" y="933.1" font-size="16.5" fill="#444" font-weight="normal" text-anchor="end" font-family='"Liberation Sans",sans-serif' textLength="46.8" lengthAdjust="spacing" >27,183</text><text x="1071.4" y="933.1" font-size="16.5" fill="#444" font-weight="normal" text-anchor="end" font-family='"Liberation Sans",sans-serif' textLength="50.9" lengthAdjust="spacing" >39,830</text><text x="1186.0" y="933.1" font-size="16.5" fill="#444" font-weight="normal" text-anchor="end" font-family='"Liberation Sans",sans-serif' textLength="50.9" lengthAdjust="spacing" >30,380</text><text x="1301.7" y="933.1" font-size="16.5" fill="#444" font-weight="normal" text-anchor="end" font-family='"Liberation Sans",sans-serif' textLength="50.4" lengthAdjust="spacing" >36,294</text><text x="1418.2" y="933.1" font-size="16.5" fill="#444" font-weight="normal" text-anchor="end" font-family='"Liberation Sans",sans-serif' textLength="49.9" lengthAdjust="spacing" >28,442</text><text x="1532.7" y="933.1" font-size="16.5" fill="#444" font-weight="normal" text-anchor="end" font-family='"Liberation Sans",sans-serif' textLength="49.4" lengthAdjust="spacing" >28,022</text><text x="1648.4" y="933.1" font-size="16.5" fill="#444" font-weight="normal" text-anchor="end" font-family='"Liberation Sans",sans-serif' textLength="47.3" lengthAdjust="spacing" >37,145</text><text x="1764.0" y="933.1" font-size="16.5" fill="#444" font-weight="normal" text-anchor="end" font-family='"Liberation Sans",sans-serif' textLength="48.7" lengthAdjust="spacing" >31,938</text><text x="232" y="968.6" font-size="16.5" fill="#444" font-weight="normal" text-anchor="start" font-family='"Liberation Sans",sans-serif' >Lower Range</text><text x="495.7" y="968.6" font-size="16.5" fill="#444" font-weight="normal" text-anchor="end" font-family='"Liberation Sans",sans-serif' textLength="46.0" lengthAdjust="spacing" >12,031</text><text x="609.7" y="968.6" font-size="16.5" fill="#444" font-weight="normal" text-anchor="end" font-family='"Liberation Sans",sans-serif' textLength="48.7" lengthAdjust="spacing" >14,588</text><text x="725.2" y="968.6" font-size="16.5" fill="#444" font-weight="normal" text-anchor="end" font-family='"Liberation Sans",sans-serif' textLength="41.6" lengthAdjust="spacing" >4,996</text><text x="840.7" y="968.6" font-size="16.5" fill="#444" font-weight="normal" text-anchor="end" font-family='"Liberation Sans",sans-serif' textLength="48.7" lengthAdjust="spacing" >18,640</text><text x="956.0" y="968.6" font-size="16.5" fill="#444" font-weight="normal" text-anchor="end" font-family='"Liberation Sans",sans-serif' textLength="38.0" lengthAdjust="spacing" >7,051</text><text x="1071.4" y="968.6" font-size="16.5" fill="#444" font-weight="normal" text-anchor="end" font-family='"Liberation Sans",sans-serif' textLength="38.8" lengthAdjust="spacing" >7,947</text><text x="1186.0" y="968.6" font-size="16.5" fill="#444" font-weight="normal" text-anchor="end" font-family='"Liberation Sans",sans-serif' textLength="46.8" lengthAdjust="spacing" >12,874</text><text x="1301.7" y="968.6" font-size="16.5" fill="#444" font-weight="normal" text-anchor="end" font-family='"Liberation Sans",sans-serif' textLength="48.2" lengthAdjust="spacing" >12,803</text><text x="1418.2" y="968.6" font-size="16.5" fill="#444" font-weight="normal" text-anchor="end" font-family='"Liberation Sans",sans-serif' textLength="39.7" lengthAdjust="spacing" >6,752</text><text x="1532.7" y="968.6" font-size="16.5" fill="#444" font-weight="normal" text-anchor="end" font-family='"Liberation Sans",sans-serif' textLength="48.7" lengthAdjust="spacing" >13,459</text><text x="1648.4" y="968.6" font-size="16.5" fill="#444" font-weight="normal" text-anchor="end" font-family='"Liberation Sans",sans-serif' textLength="46.8" lengthAdjust="spacing" >12,978</text><text x="1764.0" y="968.6" font-size="16.5" fill="#444" font-weight="normal" text-anchor="end" font-family='"Liberation Sans",sans-serif' textLength="47.3" lengthAdjust="spacing" >17,039</text><text x="232" y="1004" font-size="16.5" fill="#444" font-weight="normal" text-anchor="start" font-family='"Liberation Sans",sans-serif' >Variance</text><text x="841" y="1004" font-size="16.5" fill="#444" font-weight="normal" text-anchor="end" font-family='"Liberation Sans",sans-serif' textLength="47.7" lengthAdjust="spacing" >22.515</text><text x="1187" y="1004" font-size="16.5" fill="#444" font-weight="normal" text-anchor="end" font-family='"Liberation Sans",sans-serif' textLength="38.9" lengthAdjust="spacing" >1.620</text><text x="1533" y="1004" font-size="16.5" fill="#444" font-weight="normal" text-anchor="end" font-family='"Liberation Sans",sans-serif' textLength="26.6" lengthAdjust="spacing" >678</text><rect x="1770.3" y="873" width="9.7" height="133" fill="#ffffff"/><rect x="1771" y="873.5" width="8.5" height="61.5" rx="4" fill="#c2c2c2"/></g>
  <path d="M1971 1075.5 Q1965 1075.5 1965 1081.5 L1965 1104 Q1965.5 1108 1968 1109 L1973 1103 L1999 1103 L1999 1075.5 Z" fill="#fff"/>
</svg>
</body></html>
